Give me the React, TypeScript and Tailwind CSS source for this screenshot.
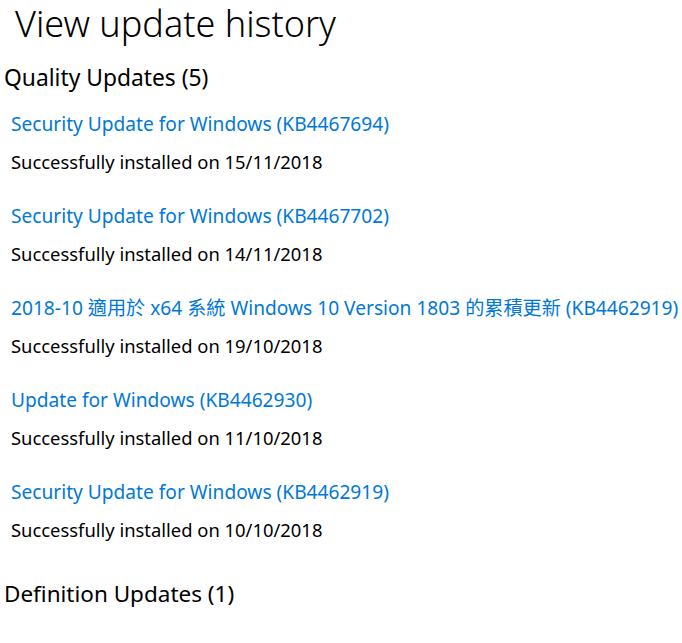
const updates = [
  { title: "Security Update for Windows (KB4467694)", date: "15/11/2018" },
  { title: "Security Update for Windows (KB4467702)", date: "14/11/2018" },
  {
    title: "2018-10 適用於 x64 系統 Windows 10 Version 1803 的累積更新 (KB4462919)",
    date: "19/10/2018",
  },
  { title: "Update for Windows (KB4462930)", date: "11/10/2018" },
  { title: "Security Update for Windows (KB4462919)", date: "10/10/2018" },
];

export default function App() {
  return (
    <div
      className="h-[643px] w-[682px] overflow-hidden bg-white text-black"
      style={{ fontFamily: '"Segoe UI", "Noto Sans", "Noto Sans CJK TC", sans-serif' }}
    >
      <h1 className="pl-[15px] pt-[2px] text-[36px] font-light leading-[44px]">
        View update history
      </h1>
      <h2 className="mt-[17px] pl-[4px] text-[22.8px] leading-[30px]">
        Quality Updates (5)
      </h2>
      <ul className="mt-[18px] flex flex-col gap-[28px] pl-[11px]">
        {updates.map((u) => (
          <li key={u.title} className="flex flex-col gap-[12px]">
            <a className="whitespace-nowrap text-[19.15px] leading-[26px] text-[#0078d7]">
              {u.title}
            </a>
            <span className="text-[18.4px] leading-[26px]">
              Successfully installed on {u.date}
            </span>
          </li>
        ))}
      </ul>
      <h2 className="mt-[36px] pl-[4px] text-[22.5px] leading-[30px]">
        Definition Updates (1)
      </h2>
    </div>
  );
}
